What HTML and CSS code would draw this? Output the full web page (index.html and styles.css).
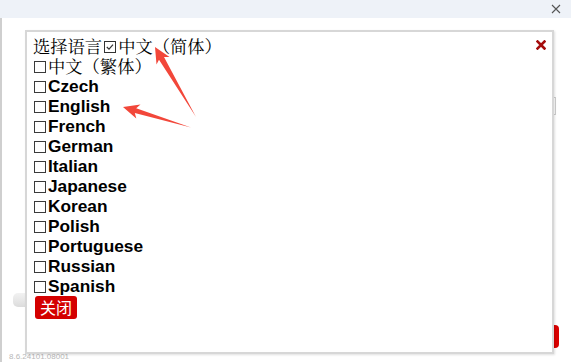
FILE: index.html
```html
<!DOCTYPE html>
<html lang="zh-CN">
<head>
<meta charset="utf-8">
<title>选择语言</title>
<link rel="stylesheet" href="styles.css">
</head>
<body>
<div class="topbar">
  <svg class="win-close" width="10" height="10" viewBox="0 0 10 10"><path d="M1 1 L9 9 M9 1 L1 9" stroke="#555" stroke-width="1.1" fill="none"/></svg>
</div>
<div class="page">
  <div class="bg-pill"></div>
  <div class="bg-input"></div>
  <div class="bg-red"></div>
  <div class="version">8.6.24101.08001</div>

  <div class="popup">
    <svg class="pop-close" width="10" height="10" viewBox="0 0 10 10"><path d="M1.5 1.5 L8.5 8.5 M8.5 1.5 L1.5 8.5" stroke="#a50d0d" stroke-width="2.6" stroke-linecap="square" fill="none"/></svg>
    <div class="row first"><span class="cn">选择语言</span><svg class="chk" width="14" height="12" viewBox="0 0 14 12"><rect x="2.5" y="0.5" width="11" height="11" fill="#fff" stroke="#333" stroke-width="1"/><path d="M4.8 6 L7 8.2 L11 3.6" stroke="#333" stroke-width="1.2" fill="none"/></svg><span class="cn">中文（简体）</span></div>
    <div class="row"><span class="box"></span><span class="cn">中文（繁体）</span></div>
    <div class="row"><span class="box"></span><b>Czech</b></div>
    <div class="row"><span class="box"></span><b>English</b></div>
    <div class="row"><span class="box"></span><b>French</b></div>
    <div class="row"><span class="box"></span><b>German</b></div>
    <div class="row"><span class="box"></span><b>Italian</b></div>
    <div class="row"><span class="box"></span><b>Japanese</b></div>
    <div class="row"><span class="box"></span><b>Korean</b></div>
    <div class="row"><span class="box"></span><b>Polish</b></div>
    <div class="row"><span class="box"></span><b>Portuguese</b></div>
    <div class="row"><span class="box"></span><b>Russian</b></div>
    <div class="row"><span class="box"></span><b>Spanish</b></div>
    <button class="btn-close">关闭</button>
  </div>

  <svg class="arrows" width="571" height="344" viewBox="0 18 571 344">
    <polygon points="155,47 169.5,57 164,57 196,117 159,59.8 156.5,64.5" fill="#f2473a"/>
    <polygon points="123,107 140.5,104.5 136.2,108.3 191,127.5 134.8,113.1 136.3,118.6" fill="#f2473a"/>
  </svg>
</div>
</body>
</html>
```

FILE: styles.css
```css
* { box-sizing: border-box; }
html, body { margin: 0; padding: 0; background: #fff; }
body {
  width: 571px;
  height: 362px;
  overflow: hidden;
  font-family: "Liberation Sans", Arial, "Noto Sans CJK SC", sans-serif;
}
.topbar {
  height: 18px;
  background: #eef2f8;
  display: flex;
  justify-content: flex-end;
  align-items: center;
  padding-right: 10px;
}
.win-close { display: block; margin-top: -1px; }
.page {
  position: relative;
  height: 344px;
  border-left: 2px solid #cfcfcf;
}
.bg-pill {
  position: absolute;
  left: 11px;
  top: 275px;
  width: 16px;
  height: 14px;
  border-radius: 5px 0 0 5px;
  background: linear-gradient(#f2f2f2, #dcdcdc);
}
.bg-input {
  position: absolute;
  left: 549px;
  top: 79px;
  width: 5px;
  height: 18px;
  border: 1px solid #cfcfcf;
  background: #fff;
}
.bg-red {
  position: absolute;
  left: 548px;
  top: 307px;
  width: 9px;
  height: 23px;
  border-radius: 0 4px 4px 0;
  background: #d90000;
}
.version {
  position: absolute;
  left: 7px;
  top: 334px;
  font-size: 8px;
  color: #b8b8b8;
  font-family: "Liberation Sans", sans-serif;
}
.popup {
  position: absolute;
  left: 23px;
  top: 12px;
  width: 529px;
  height: 324px;
  background: #fff;
  border: 2px solid #d7d7d7;
  box-shadow: 1px 1px 2px rgba(0,0,0,0.12);
  padding: 3px 6px;
  color: #000;
}
.pop-close {
  position: absolute;
  top: 8px;
  right: 6px;
}
.row {
  height: 20px;
  line-height: 20px;
  font-size: 17.3px;
  white-space: nowrap;
  display: flex;
  align-items: center;
}
.row.first { height: 21px; }
.cn {
  font-family: "Noto Serif CJK SC", "Noto Sans CJK SC", serif;
  font-weight: normal;
  display: block;
  height: 20px;
  line-height: 20px;
  overflow: visible;
}
.row b {
  font-family: "Liberation Sans", Arial, sans-serif;
  font-weight: bold;
  display: block;
  height: 20px;
  line-height: 20px;
}
.box {
  display: block;
  flex: none;
  width: 12px;
  height: 12px;
  border: 1px solid #3a3a3a;
  margin: 2px 2px 0 1px;
  background: #fff;
}
.chk {
  display: block;
  flex: none;
  margin: 2px 2px 0 0;
}
.btn-close {
  display: block;
  margin-top: 0;
  margin-left: 2px;
  height: 23px;
  padding: 0 5px;
  border: none;
  border-radius: 3px;
  background: #d40000;
  color: #fff;
  font-family: "Noto Sans CJK SC", sans-serif;
  font-size: 16px;
  line-height: 23px;
}
.arrows {
  position: absolute;
  left: -2px;
  top: 0;
  pointer-events: none;
}
```
